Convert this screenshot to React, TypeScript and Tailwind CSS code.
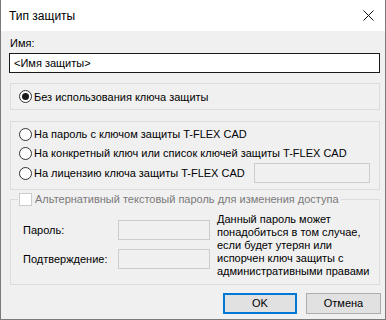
import React from "react";

function Radio({ checked = false }: { checked?: boolean }) {
  return (
    <span className="w-[13px] h-[13px] rounded-full border border-[#333333] bg-white flex items-center justify-center shrink-0">
      {checked && <span className="w-[7px] h-[7px] rounded-full bg-[#1a1a1a]" />}
    </span>
  );
}

function RadioRow({ label, checked = false }: { label: string; checked?: boolean }) {
  return (
    <label className="flex items-center gap-[2px] h-[18px]">
      <Radio checked={checked} />
      <span className="leading-[18px] whitespace-nowrap">{label}</span>
    </label>
  );
}

export default function App() {
  return (
    <div
      className="w-[386px] h-[320px] bg-[#f0f0f0] border-x border-b border-[#7a7a7a] flex flex-col text-[11px] text-black overflow-hidden"
      style={{ fontFamily: '"Liberation Sans", Arial, sans-serif' }}
    >
      {/* Title bar */}
      <div className="h-[31px] bg-white flex items-center justify-between pl-[8px] pr-[10px] shrink-0">
        <span className="leading-[16px] text-[12px]">Тип защиты</span>
        <svg width="11" height="11" viewBox="0 0 11 11" className="mr-[1px]">
          <path d="M0.5 0.5L10.5 10.5M10.5 0.5L0.5 10.5" stroke="#111" strokeWidth="1" />
        </svg>
      </div>

      <div className="pl-[8px] pt-[4px] flex flex-col">
        <div className="h-[16px] leading-[16px] pl-[1px]">Имя:</div>
        <div className="mt-[2px] h-[20px] w-[371px] border border-[#1a1a1a] bg-white pl-[4px] leading-[18px]">
          &lt;Имя защиты&gt;
        </div>

        {/* Group 1 */}
        <div className="mt-[10px] ml-[1px] w-[370px] h-[27px] border border-[#dcdcdc] flex items-center pl-[8px]">
          <RadioRow label="Без использования ключа защиты" checked />
        </div>

        {/* Group 2 */}
        <div className="mt-[11px] ml-[1px] w-[370px] h-[69px] border border-[#dcdcdc] flex flex-col pl-[8px] pt-[3px] gap-[1px]">
          <RadioRow label="На пароль с ключом защиты T-FLEX CAD" />
          <RadioRow label="На конкретный ключ или список ключей защиты T-FLEX CAD" />
          <div className="flex items-center h-[20px]">
            <RadioRow label="На лицензию ключа защиты T-FLEX CAD" />
            <div className="ml-auto mr-[9px] w-[116px] h-[20px] border border-[#cccccc] bg-[#f0f0f0]" />
          </div>
        </div>

        {/* Group 3 */}
        <div className="relative mt-[9px] ml-[1px] w-[370px] h-[86px] border border-[#dcdcdc] flex pl-[12px] pt-[12px]">
          <div className="absolute left-[7px] top-[-7px] h-[13px] flex items-center gap-[3px] bg-[#f0f0f0] pl-[1px] pr-[2px]">
            <span className="w-[13px] h-[13px] border border-[#cccccc] bg-white shrink-0" />
            <span className="text-[#7a7a7a] leading-[13px] whitespace-nowrap">
              Альтернативный текстовый пароль для изменения доступа
            </span>
          </div>
          <div className="mt-[8px] flex flex-col gap-[9px]">
            <div className="flex items-center h-[20px]">
              <span className="w-[95px] whitespace-nowrap">Пароль:</span>
              <div className="w-[92px] h-[20px] border border-[#cccccc] bg-[#f0f0f0]" />
            </div>
            <div className="flex items-center h-[20px]">
              <span className="w-[95px] whitespace-nowrap">Подтверждение:</span>
              <div className="w-[92px] h-[20px] border border-[#cccccc] bg-[#f0f0f0]" />
            </div>
          </div>
          <div className="ml-[7px] mt-[1px] leading-[13px] whitespace-nowrap">
            Данный пароль может
            <br />
            понадобиться в том случае,
            <br />
            если будет утерян или
            <br />
            испорчен ключ защиты с
            <br />
            административными правами
          </div>
        </div>
      </div>

      {/* Buttons */}
      <div className="mt-[8px] flex justify-end gap-[9px] pr-[4px]">
        <button className="w-[74px] h-[21px] border-2 border-[#0078d7] bg-[#e1e1e1] leading-[17px]">OK</button>
        <button className="w-[75px] h-[21px] border border-[#adadad] bg-[#e1e1e1] leading-[19px]">Отмена</button>
      </div>
    </div>
  );
}
